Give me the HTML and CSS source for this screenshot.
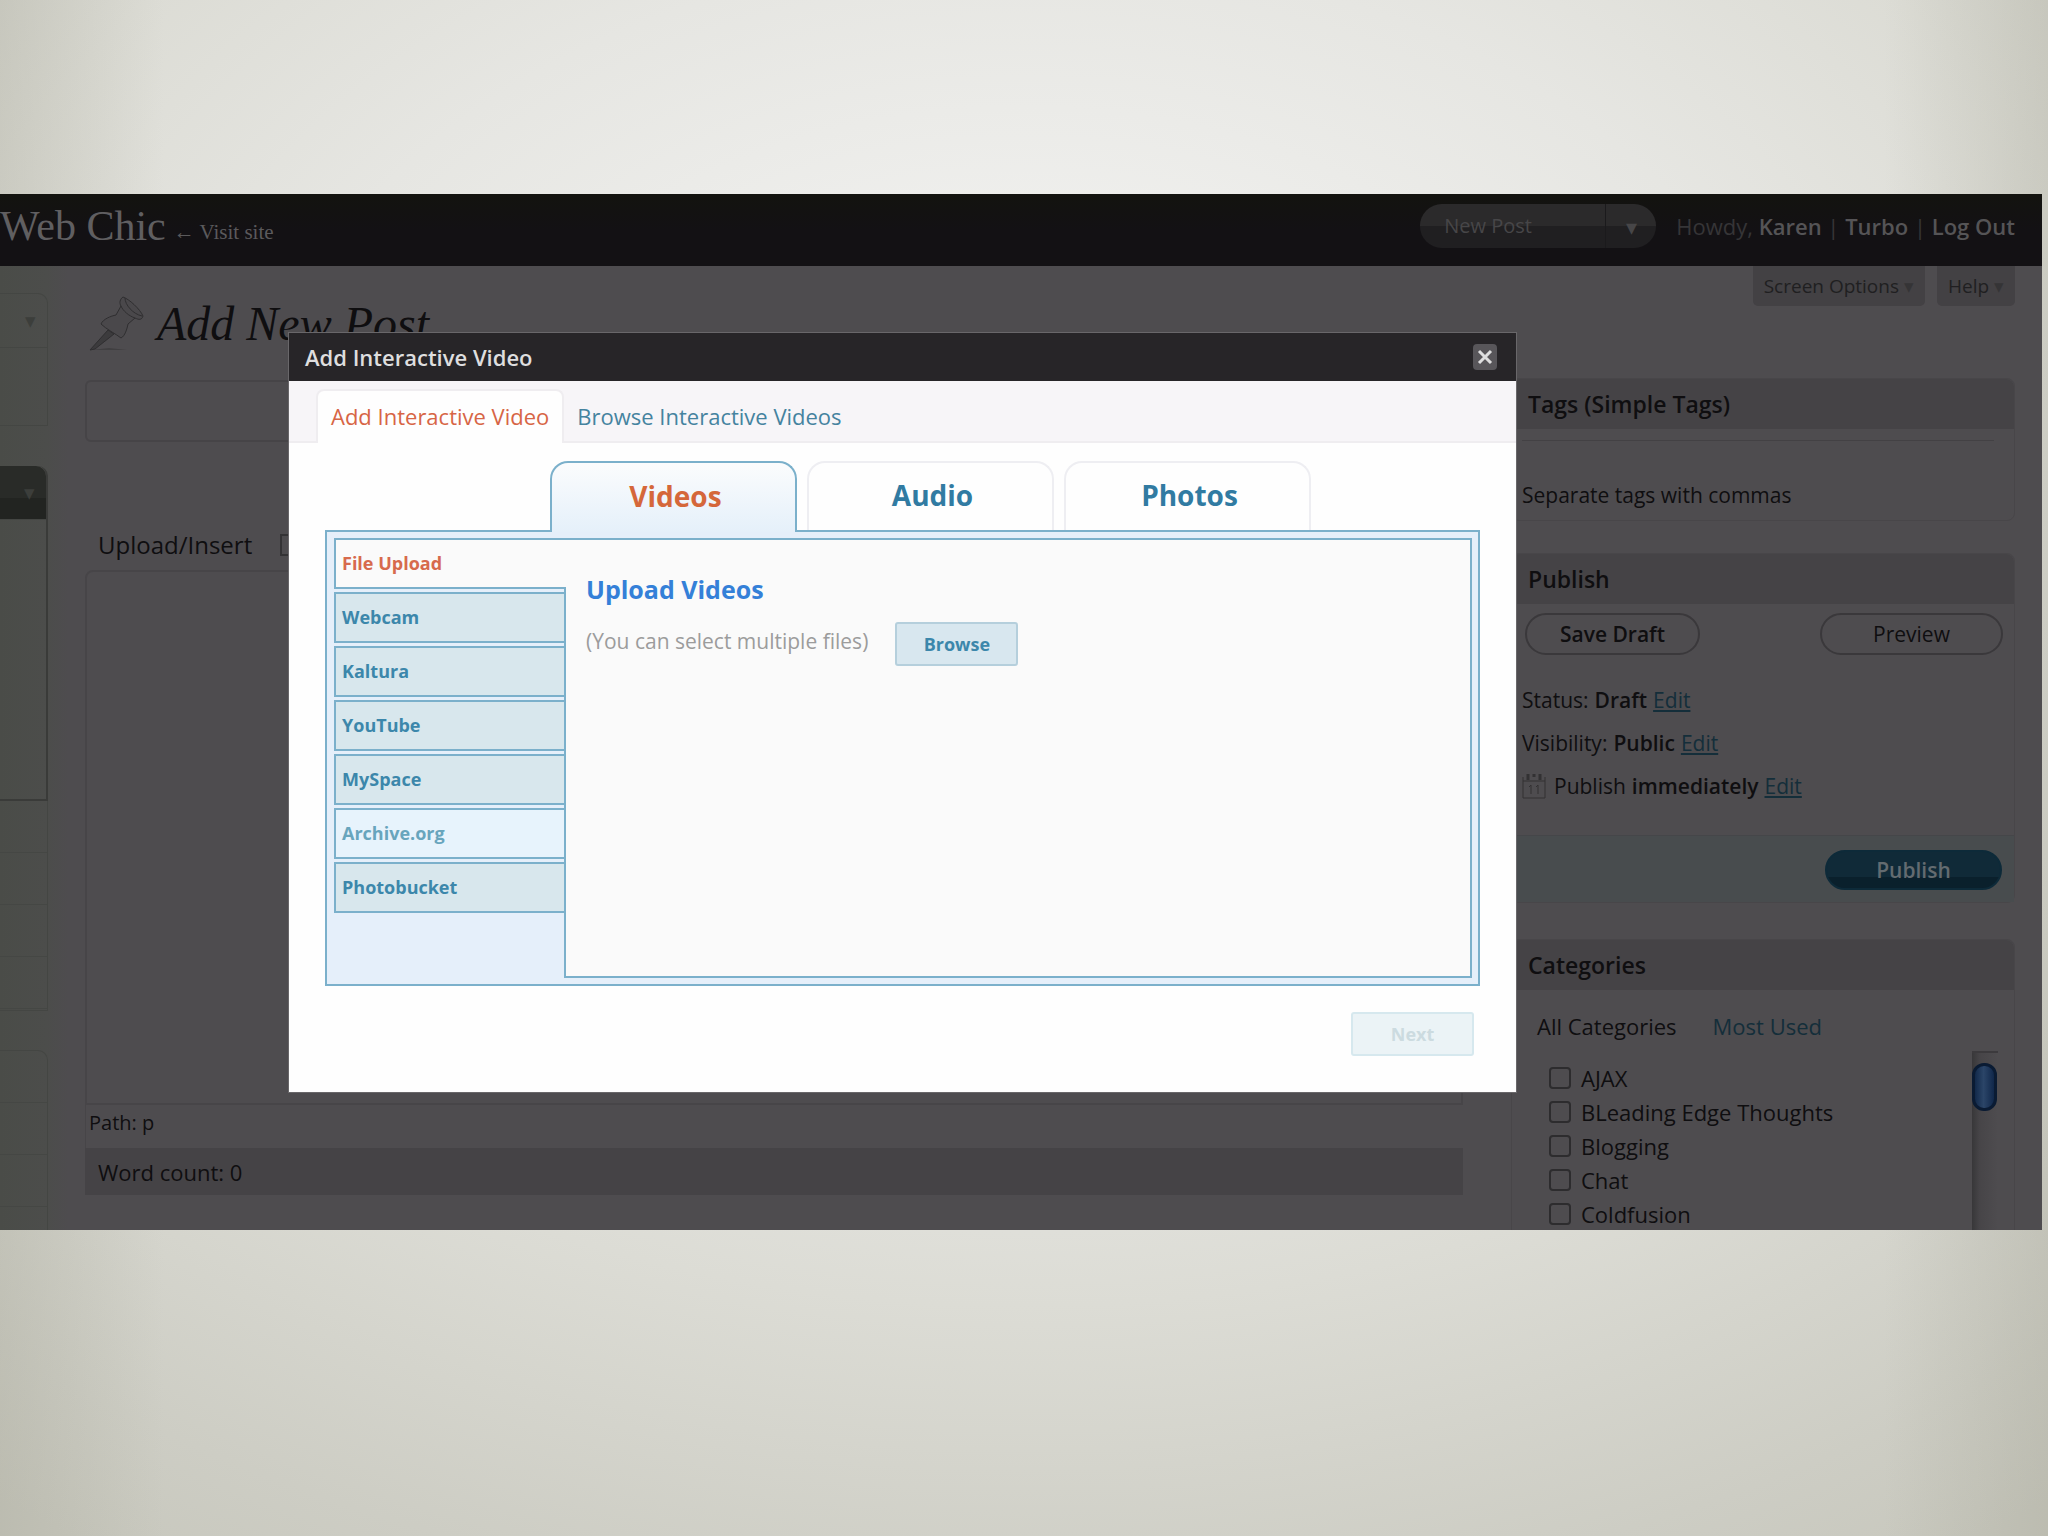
FILE: index.html
```
<!DOCTYPE html>
<html lang="en">
<head>
<meta charset="utf-8">
<meta name="viewport" content="width=device-width, initial-scale=1">
<title>Add New Post</title>
<link rel="stylesheet" href="styles.css">
</head>
<body>

<div class="screen">
  <header class="topbar">
    <h1>Web Chic</h1>
    <a href="#" class="visit">&larr; Visit site</a>
    <div class="favorites">
      <button type="button" class="fav-main">New Post</button>
      <button type="button" class="fav-toggle" aria-label="More actions">&#9662;</button>
    </div>
    <p class="user">Howdy, <a href="#">Karen</a> | <a href="#">Turbo</a> | <a href="#">Log Out</a></p>
  </header>

  <div class="content">
    <nav class="side-menu" aria-label="Admin menu">
      <div class="menu-box menu-top"><span class="menu-head">&#9662;</span></div>
      <div class="menu-box menu-current"><span class="menu-head">&#9662;</span></div>
      <div class="menu-box menu-list"><i></i><i></i><i></i><i></i></div>
      <div class="menu-box menu-list menu-last"><i></i><i></i><i></i><i></i></div>
    </nav>

    <main class="editor">
      <h2>
        <svg class="pin" viewBox="0 0 56 56" aria-hidden="true">
          <path class="pin-shadow" d="M2 54 L38 54 L20 52 Z"/>
          <path class="pin-needle" d="M19 34 L1 54 L6 53 L25 38 Z"/>
          <path class="pin-body" d="M34 1 C40 3 51 13 54 20 C53 24 50 24 46 22 L39 28 C38 33 36 40 32 42 C27 38 17 33 12 28 C14 23 22 20 27 19 L32 10 C30 7 31 3 34 1 Z"/>
          <path class="pin-line" d="M36 2 C36 9 44 18 53 20 M32 10 C34 15 40 20 46 22"/>
        </svg>
        Add New Post
      </h2>
      <input type="text" class="post-title" aria-label="Title">
      <div class="media-row">
        <span>Upload/Insert</span>
        <button type="button" class="media-btn" aria-label="Add image"></button>
      </div>
      <textarea class="post-body" aria-label="Post"></textarea>
      <div class="path">Path: p</div>
      <div class="wordcount">Word count: 0</div>
    </main>

    <aside class="boxes">
      <div class="screen-links">
        <button type="button">Screen Options <span>&#9662;</span></button>
        <button type="button">Help <span>&#9662;</span></button>
      </div>

      <section class="postbox tags">
        <h3>Tags (Simple Tags)</h3>
        <div class="inside">
          <p>Separate tags with commas</p>
        </div>
      </section>

      <section class="postbox publish">
        <h3>Publish</h3>
        <div class="actions">
          <button type="button" class="save">Save Draft</button>
          <button type="button">Preview</button>
        </div>
        <ul>
          <li>Status: <b>Draft</b> <a href="#">Edit</a></li>
          <li>Visibility: <b>Public</b> <a href="#">Edit</a></li>
          <li>
            <svg class="calendar" viewBox="0 0 24 26" aria-hidden="true">
              <path d="M1 4 V25 H23 V4 M1 8 H23"/>
              <path class="rings" d="M6 1 V7 M12 1 V4 M18 1 V7"/>
              <path d="M7 14 L9 12 V21 M14 14 L16 12 V21"/>
            </svg>
            Publish <b>immediately</b> <a href="#">Edit</a>
          </li>
        </ul>
        <div class="major">
          <button type="button">Publish</button>
        </div>
      </section>

      <section class="postbox categories">
        <h3>Categories</h3>
        <div class="cat-tabs">
          <span>All Categories</span>
          <a href="#">Most Used</a>
        </div>
        <div class="cat-panel">
          <div class="cat-list">
            <label><input type="checkbox"> AJAX</label>
            <label><input type="checkbox"> BLeading Edge Thoughts</label>
            <label><input type="checkbox"> Blogging</label>
            <label><input type="checkbox"> Chat</label>
            <label><input type="checkbox"> Coldfusion</label>
          </div>
          <div class="scrollbar"><div class="thumb"></div></div>
        </div>
      </section>
    </aside>
  </div>

  <div class="modal" role="dialog" aria-labelledby="modal-title">
    <div class="modal-title">
      <h2 id="modal-title">Add Interactive Video</h2>
      <button type="button" class="close" aria-label="Close">
        <svg viewBox="0 0 24 26" aria-hidden="true"><path d="M6 7 L18 19 M18 7 L6 19"/></svg>
      </button>
    </div>
    <nav class="subtabs">
      <a href="#" class="active">Add Interactive Video</a>
      <a href="#">Browse Interactive Videos</a>
    </nav>
    <div class="modal-body">
      <div class="tabs">
        <button type="button" class="active">Videos</button>
        <button type="button">Audio</button>
        <button type="button">Photos</button>
      </div>
      <div class="panel">
        <nav class="sources">
          <a href="#" class="active">File Upload</a>
          <a href="#">Webcam</a>
          <a href="#">Kaltura</a>
          <a href="#">YouTube</a>
          <a href="#">MySpace</a>
          <a href="#" class="hover">Archive.org</a>
          <a href="#">Photobucket</a>
        </nav>
        <div class="upload">
          <h4>Upload Videos</h4>
          <div class="upload-row">
            <span>(You can select multiple files)</span>
            <button type="button" class="btn">Browse</button>
          </div>
        </div>
      </div>
      <div class="modal-footer">
        <button type="button" class="btn" disabled>Next</button>
      </div>
    </div>
  </div>
</div>

</body>
</html>
```

FILE: styles.css
```
* {
    box-sizing: border-box;
}

body {
    margin: 0;
    min-height: 100vh;
    padding: 194px 6px 306px 0;
    background:
        linear-gradient(90deg, rgba(160, 160, 145, .3), transparent 8%, transparent 92%, rgba(160, 160, 145, .3)),
        radial-gradient(85% 80% at 50% 33%, #f0f0ee 20%, #e6e6e2 45%, #dcdcd5 65%, #cdcdc4 90%, #c8c8be 100%);
    font-family: "Open Sans", "Noto Sans", sans-serif;
    font-size: 21px;
    line-height: 28px;
    color: #0f0e10;
}

h1, h2, h3, h4, p, ul {
    margin: 0;
    padding: 0;
}

ul {
    list-style: none;
}

a {
    text-decoration: none;
}

button, input, textarea {
    font: inherit;
    color: inherit;
    margin: 0;
    padding: 0;
    background: none;
    border: 0;
}

.screen {
    position: relative;
    height: 1036px;
    overflow: hidden;
    background: #4e4c4f;
}

/* top bar */
.topbar {
    display: flex;
    align-items: center;
    height: 72px;
    padding: 0 27px 8px 0;
    background: linear-gradient(#13130f, #131114 50%);
    color: #363537;
    font-size: 22px;
    line-height: 40px;
}

.topbar h1 {
    font: 42px/40px "Liberation Serif", serif;
    color: #605f61;
}

.visit {
    margin: 12px auto 0 8px;
    font: 21px/20px "Liberation Serif", serif;
    color: #5b5a5c;
}

.favorites {
    display: flex;
    width: 236px;
    height: 44px;
    margin-right: 20px;
    border-radius: 22px;
    background: linear-gradient(#2b2a2b 50%, #201f21 50%);
    color: #474648;
}

.fav-main {
    flex: 1;
    padding-left: 24px;
    text-align: left;
    font-size: 20px;
}

.fav-toggle {
    width: 51px;
    border-left: 1px solid #1b1a1c;
}

.user a {
    color: #555456;
    font-weight: 600;
}

.content {
    display: flex;
    min-height: 964px;
}

/* left menu, mostly cut off */
.side-menu {
    width: 85px;
    padding: 27px 37px 0 0;
    background: linear-gradient(90deg, #4a4c48, #4c4d4b 55%, #4e4c4f 80%);
}

.menu-box {
    border: solid #444643;
    border-width: 1px 1px 1px 0;
    border-top-right-radius: 10px;
}

.menu-head {
    display: block;
    height: 54px;
    padding: 12px 11px 0 0;
    border-bottom: 1px solid #444643;
    text-align: right;
    color: #3c3e3b;
}

.menu-top {
    height: 133px;
    margin-bottom: 40px;
}

.menu-current {
    height: 335px;
    border-color: #3a3b39;
    border-width: 0 2px 2px 0;
}

.menu-current .menu-head {
    background: linear-gradient(#292b28 60%, #222421 60%);
    border-top-right-radius: 10px;
}

.menu-list {
    height: 210px;
    border-top-width: 0;
    border-top-right-radius: 0;
}

.menu-list i {
    display: block;
    height: 52px;
    border-bottom: 1px solid #454744;
}

.menu-last {
    margin-top: 39px;
    border-top-width: 1px;
    border-top-right-radius: 10px;
}

/* post editor */
.editor {
    flex: 1;
    display: flex;
    flex-direction: column;
    padding-top: 28px;
}

.editor h2 {
    display: flex;
    align-items: center;
    gap: 12px;
    height: 60px;
    padding-left: 4px;
    font: italic 48px/60px "Liberation Serif", serif;
}

.pin {
    width: 56px;
    height: 56px;
    stroke: #2f2e30;
    stroke-width: 1;
}

.pin-body {
    fill: #4a484b;
}

.pin-needle {
    fill: #3c3b3d;
}

.pin-shadow {
    fill: #403f41;
    stroke: none;
}

.pin-line {
    fill: none;
}

.post-title {
    height: 62px;
    margin-top: 26px;
    border: 2px solid #464447;
    border-radius: 6px;
}

.media-row {
    display: flex;
    align-items: center;
    gap: 28px;
    height: 50px;
    margin-top: 78px;
    padding-left: 13px;
    font-size: 24px;
}

.media-btn {
    width: 24px;
    height: 22px;
    border: 2px solid #343335;
}

.post-body {
    flex: none;
    height: 535px;
    border: 2px solid #474548;
    border-radius: 8px 8px 0 0;
    resize: none;
}

.path {
    height: 43px;
    padding: 4px 3px;
    border-left: 1px solid #474548;
    font-size: 20px;
}

.wordcount {
    height: 47px;
    padding: 10px 13px;
    background: #454346;
    font-size: 22px;
}

/* right column */
.boxes {
    width: 579px;
    padding: 0 27px 0 48px;
}

.screen-links {
    display: flex;
    justify-content: flex-end;
    gap: 12px;
    margin-bottom: 72px;
}

.screen-links button {
    height: 40px;
    padding: 0 11px;
    background: #434144;
    border-radius: 0 0 5px 5px;
    color: #201f21;
    font-size: 19px;
}

.screen-links span {
    color: #353436;
}

.postbox {
    margin-bottom: 32px;
    border: 1px solid #484649;
    border-radius: 8px;
}

.postbox h3 {
    height: 50px;
    padding: 0 16px;
    background: #454346;
    border-radius: 8px 8px 0 0;
    font-size: 23px;
    line-height: 50px;
    font-weight: 600;
}

.tags {
    height: 143px;
}

.tags .inside {
    margin: 11px 20px 0 10px;
    padding-top: 40px;
    border-top: 1px solid #434144;
}

.actions {
    display: flex;
    justify-content: space-between;
    padding: 9px 11px 0 13px;
}

.actions button {
    width: 183px;
    height: 42px;
    border: 2px solid #3a383b;
    border-radius: 21px;
    line-height: 38px;
}

.actions .save {
    width: 175px;
    font-weight: 600;
}

.publish ul {
    padding: 23px 10px 28px;
}

.publish li {
    display: flex;
    align-items: center;
    gap: 6px;
    height: 43px;
}

.publish b {
    font-weight: 600;
}

.publish a {
    color: #142e3a;
    text-decoration: underline;
}

.calendar {
    width: 24px;
    height: 26px;
    margin-right: 2px;
    fill: none;
    stroke: #323133;
    stroke-width: 1;
}

.calendar .rings {
    stroke-width: 3;
}

.major {
    display: flex;
    justify-content: flex-end;
    padding: 14px 12px 12px;
    background: #484c4e;
    border-top: 1px solid #454649;
}

.major button {
    width: 177px;
    height: 40px;
    border-radius: 20px;
    background: linear-gradient(#102a38 70%, #0a202c 70%);
    border: 2px solid #0d2a39;
    color: #636b70;
    font-weight: 600;
    line-height: 34px;
}

.categories {
    margin-top: 36px;
}

.cat-tabs {
    display: flex;
    gap: 36px;
    padding: 22px 25px 0;
    font-size: 22px;
}

.cat-tabs a {
    color: #142e3a;
}

.cat-panel {
    display: flex;
    justify-content: space-between;
    margin-top: 11px;
    padding: 0 16px 0 37px;
}

.cat-list {
    padding-top: 10px;
}

.cat-list label {
    display: flex;
    align-items: center;
    gap: 10px;
    height: 34px;
    font-size: 22px;
}

.cat-list input {
    appearance: none;
    width: 22px;
    height: 22px;
    border: 2px solid #2d2c2e;
    border-radius: 4px;
}

.scrollbar {
    width: 26px;
    height: 200px;
    padding-top: 10px;
    border-top: 2px solid #3c3a3d;
    background: linear-gradient(90deg, #383739, #474548 30%, #4e4c4f);
}

.thumb {
    width: 25px;
    height: 48px;
    border: 3px solid #0a1b33;
    border-radius: 12px;
    background: linear-gradient(90deg, #12294a, #2b4568 45%, #10274a);
}

/* dialog */
.modal {
    position: absolute;
    left: 288px;
    right: 525px;
    top: 138px;
    height: 761px;
    background: #fefefe;
    border: 1px solid #69676a;
    font-size: 22px;
}

.modal-title {
    display: flex;
    align-items: center;
    justify-content: space-between;
    height: 48px;
    padding: 0 19px 0 16px;
    background: #272528;
    color: #dededf;
}

.modal-title h2 {
    font-size: 22px;
    font-weight: 600;
}

.close {
    width: 24px;
    height: 26px;
    border-radius: 4px;
    background: #58565a;
}

.close svg {
    display: block;
    fill: none;
    stroke: #dededf;
    stroke-width: 3;
}

.subtabs {
    display: flex;
    height: 62px;
    padding: 8px 27px 0;
    background: #f7f5f8;
    border-bottom: 2px solid #efedf0;
    line-height: 54px;
}

.subtabs a {
    height: 54px;
    padding: 0 13px;
    color: #45839f;
}

.subtabs .active {
    background: #fefefe;
    border: 2px solid #efedf0;
    border-bottom: 0;
    border-radius: 8px 8px 0 0;
    color: #d76545;
    line-height: 50px;
}

.modal-body {
    padding: 18px 36px 0;
}

.tabs {
    position: relative;
    display: flex;
    justify-content: center;
    gap: 10px;
    padding-left: 56px;
}

.tabs button {
    width: 247px;
    height: 69px;
    padding: 0 0 3px 4px;
    border: 2px solid #eeeef2;
    border-bottom: 0;
    border-radius: 18px 18px 0 0;
    color: #317ba2;
    font-size: 28px;
    font-weight: 700;
}

.tabs .active {
    height: 71px;
    margin-bottom: -2px;
    background: linear-gradient(#fbfcfd, #e5f0fa);
    border-color: #7bb0cb;
    color: #d5673a;
}

.panel {
    display: flex;
    height: 456px;
    padding: 6px;
    padding-left: 7px;
    background: #e5effa;
    border: 2px solid #7bb0cb;
}

.sources {
    display: flex;
    flex-direction: column;
    gap: 3px;
    width: 230px;
    font-size: 18px;
    font-weight: 700;
}

.sources a {
    height: 51px;
    padding-left: 6px;
    background: #d8e7ed;
    border: 2px solid #7bb0cb;
    border-right: 0;
    color: #3c87ab;
    line-height: 46px;
}

.sources .active {
    position: relative;
    margin-right: -2px;
    background: #fafafa;
    color: #d76a4d;
}

.sources .hover {
    background: #e7f3fc;
    color: #68a5bd;
}

.upload {
    flex: 1;
    padding: 35px 20px;
    background: #fafafa;
    border: 2px solid #7bb0cb;
}

.upload h4 {
    color: #3480d8;
    font-size: 25px;
    font-weight: 700;
}

.upload-row {
    display: flex;
    gap: 27px;
    margin-top: 19px;
    color: #9c9c9c;
    font-size: 21px;
    line-height: 38px;
}

.btn {
    width: 123px;
    height: 44px;
    background: #d8e7ef;
    border: 2px solid #b5cfdc;
    border-radius: 3px;
    color: #3c87ab;
    font-size: 18px;
    font-weight: 700;
    line-height: 38px;
}

.btn:disabled {
    background: #ebf3f6;
    border-color: #d6e8ee;
    color: #ccdbe0;
}

.modal-footer {
    display: flex;
    justify-content: flex-end;
    padding: 26px 6px 0 0;
}
```
